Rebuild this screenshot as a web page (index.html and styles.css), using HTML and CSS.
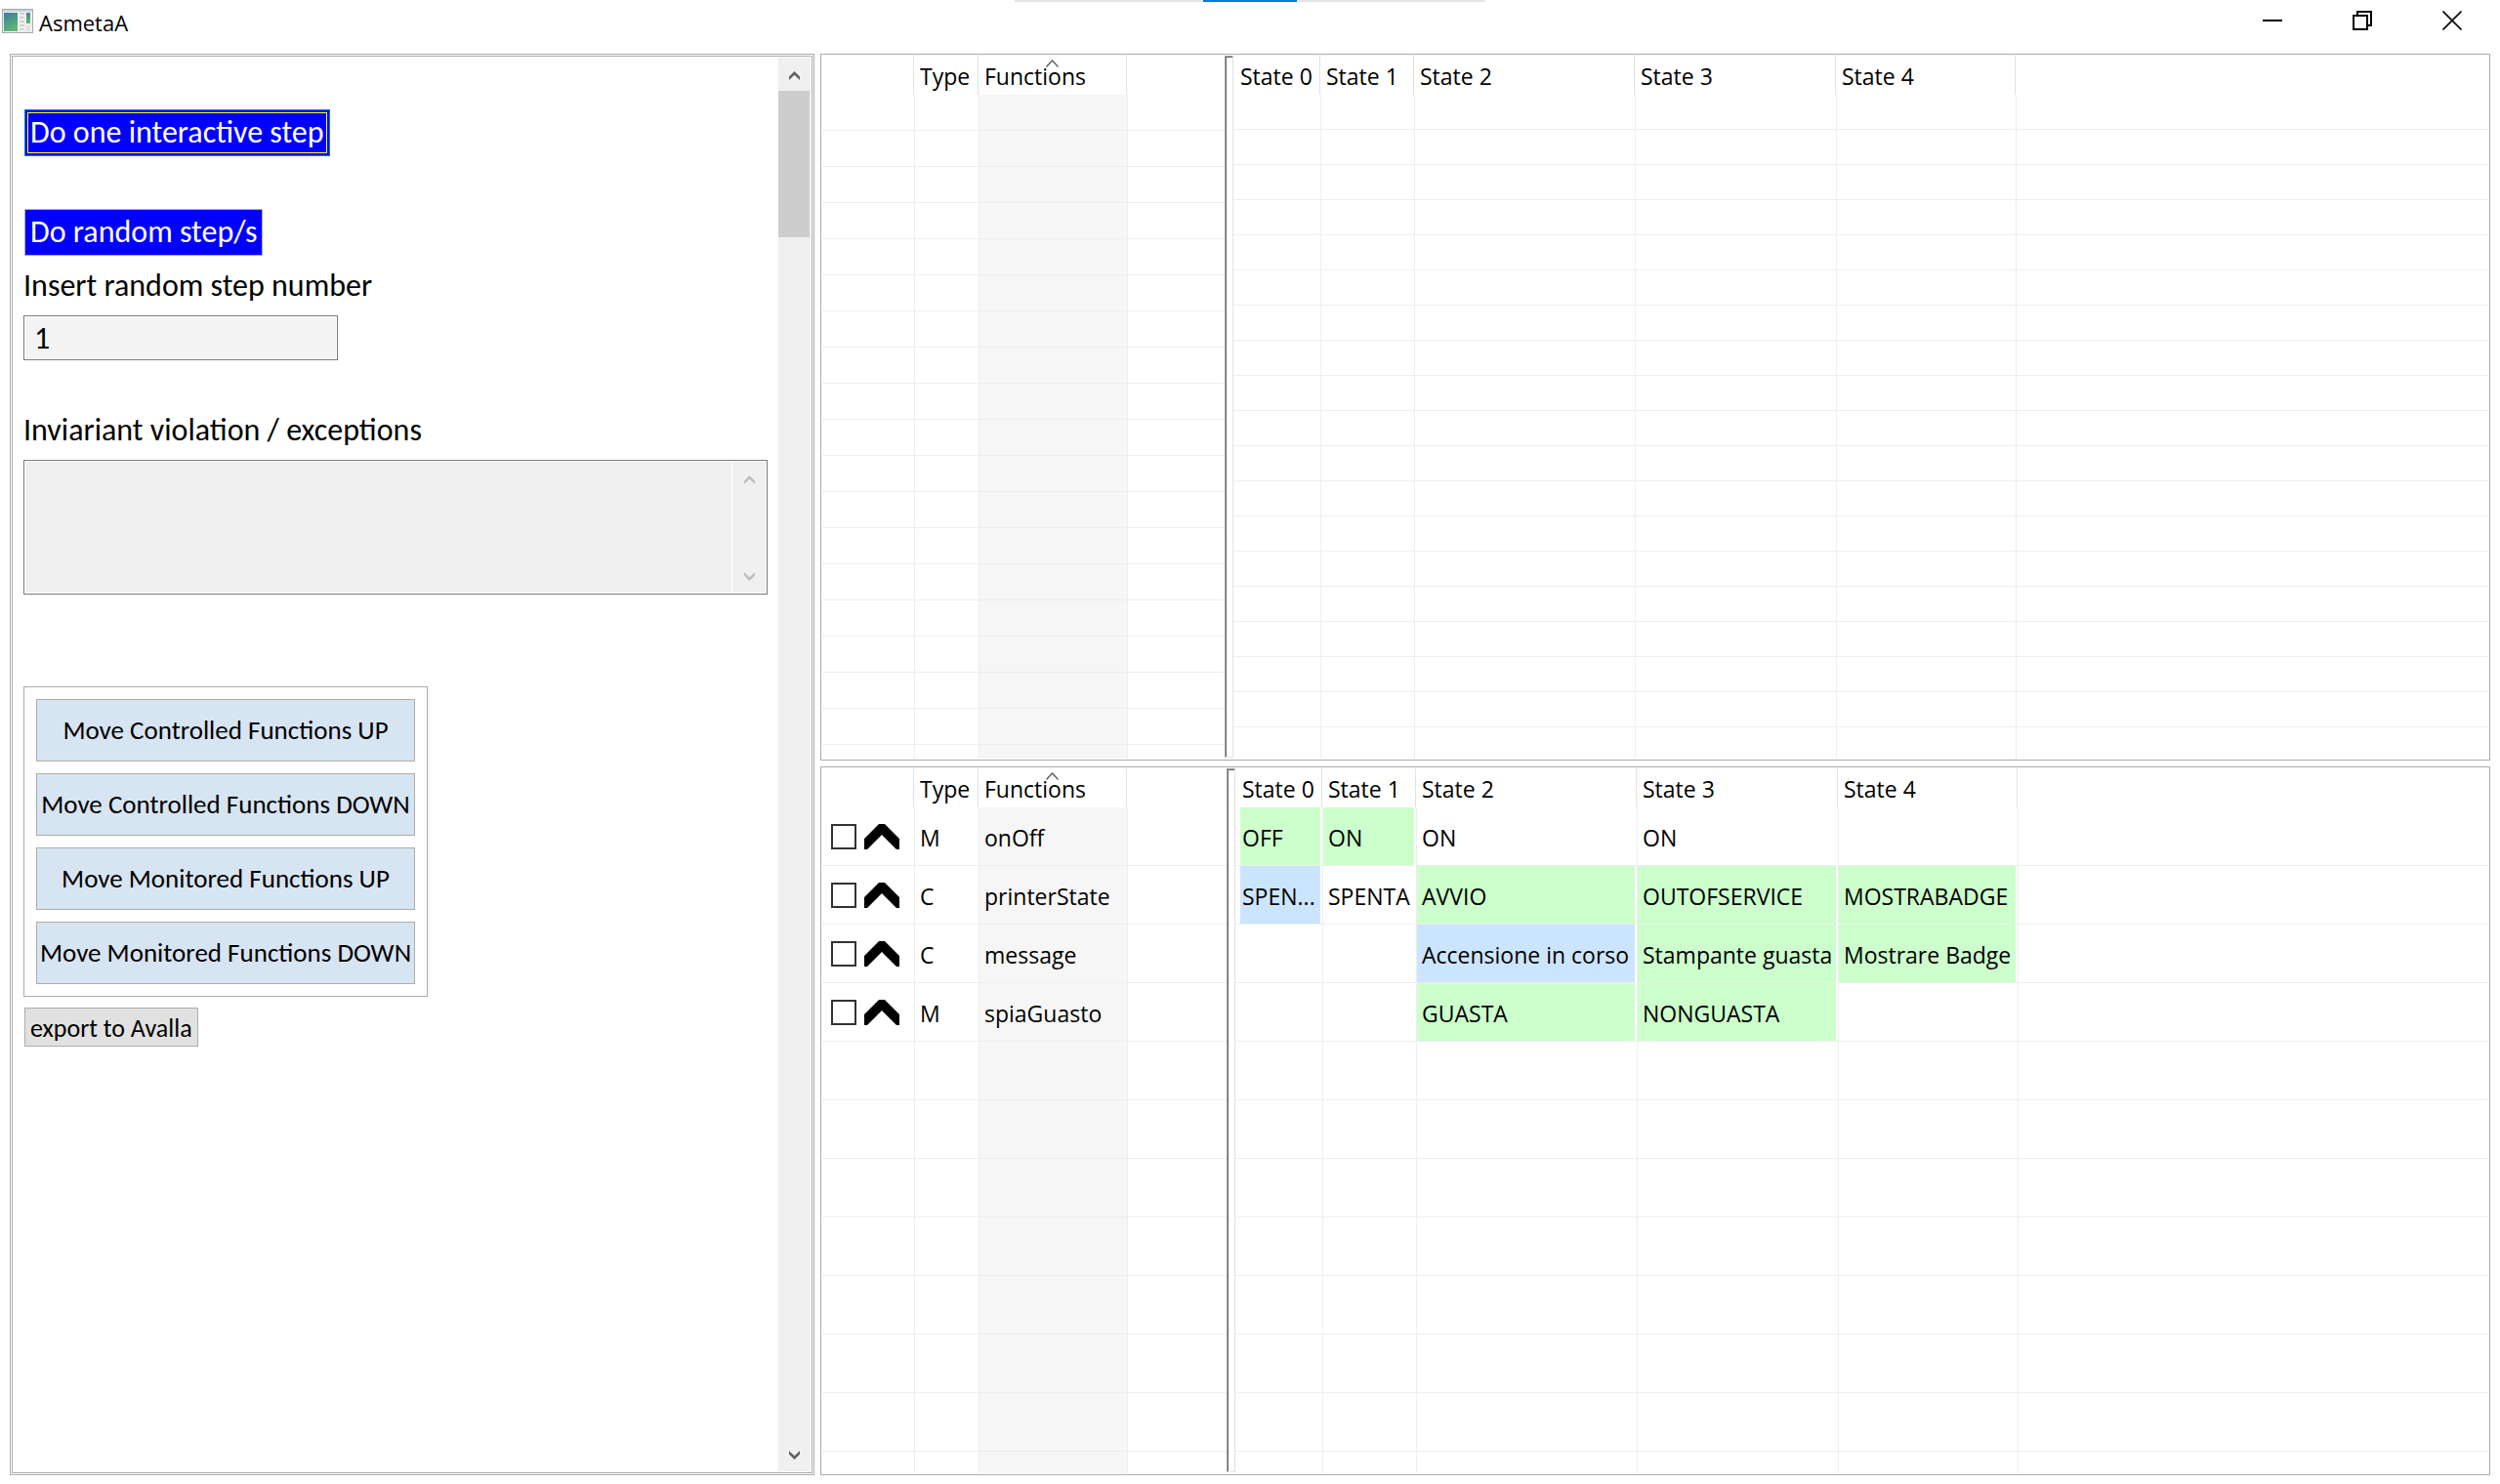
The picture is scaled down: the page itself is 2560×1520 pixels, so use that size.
FILE: index.html
```html
<!DOCTYPE html>
<html lang="en">
<head>
<meta charset="utf-8">
<title>AsmetaA</title>
<link rel="stylesheet" href="styles.css">
</head>
<body>
<svg class="defs" aria-hidden="true">
  <symbol id="up" viewBox="0 0 11 9"><path d="M0 5.500 5.500 0 11 5.500V9L5.500 3.800 0 9z" fill="currentColor"/></symbol>
  <symbol id="down" viewBox="0 0 11 9"><path d="M0 3.500 5.500 9 11 3.500V0L5.500 5.200 0 0z" fill="currentColor"/></symbol>
  <symbol id="sort" viewBox="0 0 13 8"><path d="M0.500 7.500 6.500 1 12.500 7.500" fill="none" stroke="#555" stroke-width="1.200"/></symbol>
  <symbol id="move" viewBox="0 0 36 26"><path d="M0 15 15 0h6l15 15v11h-3L18 11 3 26H0z" fill="#000"/></symbol>
</svg>
<div class="strip"></div>
<header class="titlebar">
  <svg class="app-icon" width="32" height="26" viewBox="0 0 32 26">
    <defs><linearGradient id="g" x1="0" y1="0" x2="0.4" y2="1"><stop offset="0" stop-color="#3f7aa0"/><stop offset="1" stop-color="#5cb873"/></linearGradient></defs>
    <rect x="0.500" y="0.500" width="31" height="24" fill="#f0f0f0" stroke="#a4a9ad"/>
    <rect x="1" y="1" width="30" height="2" fill="#c9d3dc"/>
    <rect x="2" y="4" width="14" height="19" fill="url(#g)"/>
    <path d="M18 5h5M18 9h5M18 13h5M18 17h5M18 21h5" stroke="#d2d2d2" stroke-width="2"/>
    <rect x="25" y="4" width="4" height="11" fill="url(#g)"/>
    <rect x="25" y="17" width="4" height="6" fill="#e2e2e2"/>
  </svg>
  <h1 class="title">AsmetaA</h1>
  <div class="window-buttons">
    <button type="button" aria-label="Minimize"><svg width="20" height="20"><path d="M0 10h20" stroke="#000" stroke-width="2"/></svg></button>
    <button type="button" aria-label="Restore"><svg width="20" height="20"><path d="M1 5h14v14H1zM5 5V1h14v14h-4" fill="none" stroke="#000" stroke-width="2"/></svg></button>
    <button type="button" aria-label="Close"><svg width="20" height="20"><path d="M0.500 0.500 19.500 19.500M19.500 0.500 0.500 19.500" stroke="#111" stroke-width="1.800"/></svg></button>
  </div>
</header>
<main class="window">
  <section class="controls">
    <form class="form">
      <button type="button" class="step focused">Do one interactive step</button>
      <button type="button" class="step">Do random step/s</button>
      <label class="label" for="count">Insert random step number</label>
      <input class="count" id="count" type="text" value="1">
      <label class="label spaced" for="errors">Inviariant violation / exceptions</label>
      <div class="errors">
        <textarea id="errors" readonly></textarea>
        <div class="mini-scroll"><svg width="11" height="9"><use href="#up"/></svg><svg width="11" height="9"><use href="#down"/></svg></div>
      </div>
      <div class="moves">
        <button type="button">Move Controlled Functions UP</button>
        <button type="button">Move Controlled Functions DOWN</button>
        <button type="button">Move Monitored Functions UP</button>
        <button type="button">Move Monitored Functions DOWN</button>
      </div>
      <button type="button" class="export">export to Avalla</button>
    </form>
    <div class="scrollbar">
      <div class="arrow"><svg width="11" height="9"><use href="#up"/></svg></div>
      <div class="thumb"></div>
      <div class="arrow last"><svg width="11" height="9"><use href="#down"/></svg></div>
    </div>
  </section>
  <div class="tables">
    <section class="panel upper">
      <div class="pane">
        <table class="functions">
          <colgroup><col class="c-pick"><col class="c-type"><col class="c-name"><col></colgroup>
          <thead><tr><th></th><th>Type</th><th class="sorted">Functions<svg width="13" height="8"><use href="#sort"/></svg></th><th></th></tr></thead>
          <tbody><tr class="rest"><td></td><td></td><td></td><td></td></tr></tbody>
        </table>
      </div>
      <div class="sash"></div>
      <div class="pane">
        <table class="states">
          <colgroup><col class="c-s0"><col class="c-s1"><col class="c-s2"><col class="c-s3"><col class="c-s4"><col></colgroup>
          <thead><tr><th>State 0</th><th>State 1</th><th>State 2</th><th>State 3</th><th>State 4</th><th></th></tr></thead>
          <tbody><tr class="rest"><td></td><td></td><td></td><td></td><td></td><td></td></tr></tbody>
        </table>
      </div>
    </section>
    <section class="panel lower">
      <div class="pane">
        <table class="functions">
          <colgroup><col class="c-pick"><col class="c-type"><col class="c-name"><col></colgroup>
          <thead><tr><th></th><th>Type</th><th class="sorted">Functions<svg width="13" height="8"><use href="#sort"/></svg></th><th></th></tr></thead>
          <tbody>
            <tr><td><div class="pick"><input type="checkbox" aria-label="onOff"><svg width="36" height="26"><use href="#move"/></svg></div></td><td>M</td><td>onOff</td><td></td></tr>
            <tr><td><div class="pick"><input type="checkbox" aria-label="printerState"><svg width="36" height="26"><use href="#move"/></svg></div></td><td>C</td><td>printerState</td><td></td></tr>
            <tr><td><div class="pick"><input type="checkbox" aria-label="message"><svg width="36" height="26"><use href="#move"/></svg></div></td><td>C</td><td>message</td><td></td></tr>
            <tr><td><div class="pick"><input type="checkbox" aria-label="spiaGuasto"><svg width="36" height="26"><use href="#move"/></svg></div></td><td>M</td><td>spiaGuasto</td><td></td></tr>
            <tr class="rest"><td></td><td></td><td></td><td></td></tr>
          </tbody>
        </table>
      </div>
      <div class="sash"></div>
      <div class="pane">
        <table class="states">
          <colgroup><col class="c-s0"><col class="c-s1"><col class="c-s2"><col class="c-s3"><col class="c-s4"><col></colgroup>
          <thead><tr><th>State 0</th><th>State 1</th><th>State 2</th><th>State 3</th><th>State 4</th><th></th></tr></thead>
          <tbody>
            <tr><td class="green">OFF</td><td class="green">ON</td><td>ON</td><td>ON</td><td></td><td></td></tr>
            <tr><td class="blue">SPEN...</td><td>SPENTA</td><td class="green">AVVIO</td><td class="green">OUTOFSERVICE</td><td class="green">MOSTRABADGE</td><td></td></tr>
            <tr><td></td><td></td><td class="blue">Accensione in corso</td><td class="green">Stampante guasta</td><td class="green">Mostrare Badge</td><td></td></tr>
            <tr><td></td><td></td><td class="green">GUASTA</td><td class="green">NONGUASTA</td><td></td><td></td></tr>
            <tr class="rest"><td></td><td></td><td></td><td></td><td></td><td></td></tr>
          </tbody>
        </table>
      </div>
    </section>
  </div>
</main>
</body>
</html>
```
FILE: styles.css
```css
* { box-sizing: border-box; }
body {
  margin: 0;
  height: 100vh;
  display: flex;
  flex-direction: column;
  background: #fff;
  color: #000;
  font-family: "Open Sans", "Noto Sans", sans-serif;
  font-size: 23px;
}
button, input, textarea { font: inherit; color: inherit; margin: 0; border-radius: 0; }
svg { display: block; }
.defs { position: absolute; width: 0; height: 0; }

/* Title bar */
.strip {
  position: absolute;
  top: 0;
  left: calc(50% - 241px);
  width: 482px;
  height: 2px;
  background: linear-gradient(#0078d7, #0078d7) center / 96px 100% no-repeat #e5e5e5;
}
.titlebar { flex: none; height: 55px; display: flex; align-items: flex-start; }
.app-icon { margin: 9px 6px 0 2px; }
.title { margin: 7px 0 0; font-size: 22px; line-height: 32px; font-weight: 400; }
.window-buttons { margin-left: auto; display: flex; padding-right: 3px; }
.window-buttons button {
  width: 92px;
  height: 42px;
  padding: 0;
  border: 0;
  background: none;
  display: grid;
  place-items: center;
}

/* Main split */
.window {
  flex: 1;
  min-height: 0;
  display: grid;
  grid-template-columns: 824fr 1710fr;
  gap: 6px;
  padding: 0 10px 9px;
}
.controls { display: flex; border: 3px double #ababb0; min-height: 0; overflow: hidden; }
.form {
  flex: 1;
  min-width: 0;
  display: flex;
  flex-direction: column;
  align-items: flex-start;
  padding: 54px 11px 0;
  font-family: Carlito, Calibri, Lato, sans-serif;
  font-size: 32px;
}
.step {
  height: 48px;
  margin: 0 0 54px 1px;
  padding: 0 5px;
  border: 1px solid #adadad;
  background: #00f;
  color: #fff;
  line-height: 40px;
}
.focused { border-color: #0078d7; outline: 1px solid #ff0; outline-offset: -4px; }
.step + .step { margin-bottom: 11px; }
.label { line-height: 40px; margin-bottom: 10px; }
.spaced { margin-top: 52px; }
.count {
  width: 322px;
  height: 46px;
  padding: 0 10px;
  border: 1px solid #7a7a7a;
  background: #f4f4f4;
  box-shadow: inset 0 0 0 1px #fff;
}
.errors {
  align-self: stretch;
  display: flex;
  height: 138px;
  border: 1px solid #7a7a7a;
  background: #f0f0f0;
  box-shadow: inset 0 0 0 1px #fff;
  padding: 1px;
}
.errors textarea { flex: 1; border: 0; background: none; resize: none; outline: 0; }
.mini-scroll {
  width: 35px;
  border-left: 1px solid #fff;
  padding: 14px 0 12px;
  display: flex;
  flex-direction: column;
  justify-content: space-between;
  align-items: center;
  color: #bfbfbf;
}
.moves {
  display: grid;
  gap: 12px;
  width: 414px;
  margin-top: 94px;
  padding: 12px;
  border: 1px solid #ababb0;
}
.moves button {
  height: 64px;
  padding: 0 0 2px;
  border: 1px solid #adadad;
  background: #d7e4f2;
  font-size: 27px;
  white-space: nowrap;
}
.export {
  height: 40px;
  margin: 11px 0 0 1px;
  padding: 2px 5px 0;
  border: 1px solid #adadad;
  background: #e1e1e1;
  font-size: 26px;
}
.scrollbar { width: 33px; margin: 1px 1px 1px 0; background: #f0f0f0; display: flex; flex-direction: column; color: #606060; }
.arrow { height: 34px; display: grid; place-items: center; padding-top: 3px; }
.last { margin-top: auto; padding-top: 1px; }
.thumb { height: 150px; margin-right: 1px; background: #cdcdcd; }

/* Tables */
.tables { display: grid; grid-template-rows: minmax(0, 724fr) minmax(0, 726fr); gap: 6px; min-width: 0; min-height: 0; }
.panel { display: grid; border: 1px solid #ababb0; padding: 1px; min-height: 0; }
.upper { grid-template-columns: 412fr 9px 1285fr; }
.lower { grid-template-columns: 414fr 9px 1283fr; }
.pane { min-width: 0; overflow: hidden; }
.sash {
  margin-bottom: 1px;
  border: 1px solid #e3e3e3;
  border-top-color: #a0a0a0;
  border-left-color: #a0a0a0;
  box-shadow: inset 1px 1px #696969;
}
table { width: 100%; height: 100%; table-layout: fixed; border-collapse: separate; border-spacing: 0; }
th, td { padding: 2px 0 0 5px; text-align: left; white-space: nowrap; overflow: hidden; font-weight: 400; line-height: 32px; }
th { height: 40px; background: linear-gradient(#e2e2e2, #e2e2e2) right 1px top / 1px 100% no-repeat; }
td { height: 60px; border: solid #eee; border-width: 0 1px 1px 0; background-repeat: no-repeat; }
th:last-child { background: none; }
td:last-child { border-right: 0; }
.states th:first-child, .states td:first-child { padding-left: 7px; }
.functions td:nth-child(3) { background-color: #f6f6f6; }
.functions td:first-child { padding: 0 0 0 9px; }
.sorted { position: relative; }
.sorted svg { position: absolute; top: 4px; left: calc(50% - 8px); }
.rest td { height: auto; border-bottom: 0; background-repeat: repeat; background-image: repeating-linear-gradient(transparent 0 59px, #eee 59px 60px); }
.upper .functions .rest td { background-image: repeating-linear-gradient(transparent 0 36px, #eee 36px 37px); }
.upper .states .rest td { background-image: repeating-linear-gradient(transparent 0 35px, #eee 35px 36px); }
.green { background-image: linear-gradient(#cfc, #cfc); background-size: calc(100% - 2px) 100%; }
.blue { background-image: linear-gradient(#cce5ff, #cce5ff); background-size: calc(100% - 2px) 100%; }
.green:first-child, .blue:first-child { background-position: 5px 0; background-size: calc(100% - 7px) 100%; }
.pick { display: flex; gap: 8px; align-items: center; }
.pick input { appearance: none; width: 26px; height: 26px; border: 2px solid #333; background: #fff; }
.c-pick { width: 95px; }
.c-type { width: 66px; }
.c-name { width: 152px; }
.c-s0 { width: 90px; }
.c-s1 { width: 96px; }
.c-s2 { width: 226px; }
.c-s3 { width: 206px; }
.c-s4 { width: 184px; }
```
